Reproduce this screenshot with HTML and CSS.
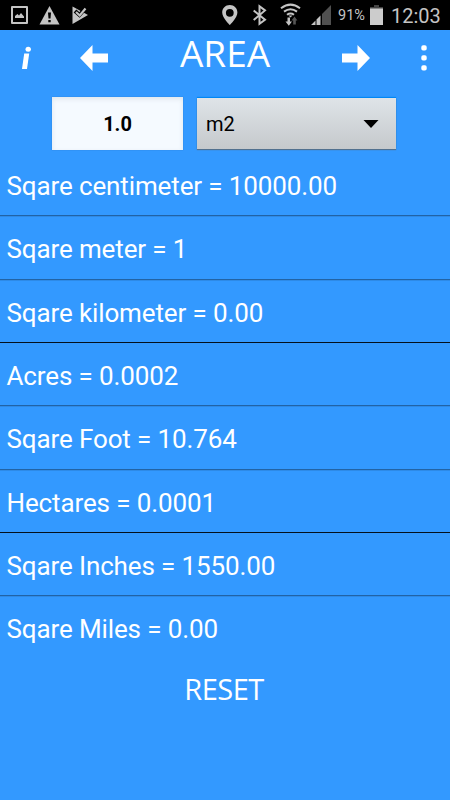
FILE: index.html
```html
<!DOCTYPE html>
<html lang="en">
<head>
  <meta charset="UTF-8" />
  <meta name="viewport" content="width=device-width, initial-scale=1.0" />
  <title>Area</title>
  <link rel="stylesheet" href="styles.css">
</head>
<body>
  <div class="status-bar">
    <svg class="status-left" width="100" height="30" viewBox="0 0 100 30">
      <path d="M12 7h15v16H12z" fill="none" stroke="#c4c4c4" stroke-width="2" stroke-linejoin="round" />
      <path d="M15 18v-2l2.500-2 1.500 1.500 2-2.500 3 3.500V18z" fill="#c4c4c4" />
      <path d="M49.500 6L59.500 24.500H39.500z" fill="#c4c4c4" />
      <path d="M48 12.500h3l-.5 6h-2zM48.300 20h2.400v2.300h-2.400z" fill="#000" />
      <path d="M72.500 6.500L88 15 72.500 24z" fill="#c4c4c4" />
      <path d="M75 11l4.500 4L87 6.500" fill="none" stroke="#000" stroke-width="4" />
      <path d="M76 12l3.700 3.500L85.500 8.500" fill="none" stroke="#c4c4c4" stroke-width="2.200" />
    </svg>
    <svg class="status-right" width="116" height="30" viewBox="218 0 116 30">
      <path fill-rule="evenodd" d="M229.800 5c-4.400 0-7.600 3.300-7.600 7.400 0 5.200 7.600 12.600 7.600 12.600s7.600-7.400 7.600-12.600c0-4.100-3.200-7.400-7.600-7.400zm0 3.900a3.900 3.900 0 1 1 0 7.800 3.900 3.900 0 0 1 0-7.800z" fill="#c4c4c4" />
      <path d="M253.700 10.500l11.300 9.200-5.500 4V6.200l5.500 4.200-11.300 9.600" fill="none" stroke="#c4c4c4" stroke-width="2" />
      <g fill="none" stroke="#c4c4c4" stroke-width="2">
        <path d="M281 8.300q9.500-7.400 19 0" />
        <path d="M284 11.600q6.500-4.800 13 0" />
        <path d="M287 14.800q3.500-2.500 7 0" />
      </g>
      <path d="M288.500 15.500h4l-2 2z" fill="#c4c4c4" />
      <path d="M287.500 17.500h2.500v4h2l-3.200 4.200-3.300-4.200h2z" fill="#c4c4c4" />
      <path d="M293.200 24.500h2.600v-4h1.600l-2.900-4-2.900 4h1.600z" fill="#555" />
      <path d="M331 5v20h-9V14z" fill="#505050" />
      <path d="M320.500 15.500V25h-4v-5.500zM315.500 20.500V25H311z" fill="#c4c4c4" />
    </svg>
    <span class="percent">91%</span>
    <svg class="battery" width="13" height="20" viewBox="0 0 13 20">
      <path d="M4 0h5v2h4v2H0V2h4z" fill="#444" />
      <path d="M0 3.500h13V20H0z" fill="#ccc" />
    </svg>
    <span class="clock">12:03</span>
  </div>

  <div class="header">
    <svg class="icon" width="14" height="26" viewBox="0 0 14 26">
      <ellipse cx="8.200" cy="4.300" rx="2.700" ry="2.500" />
      <path d="M4.200 8.500h5L7 24H2z" />
    </svg>
    <svg class="icon back" width="28" height="26" viewBox="0 0 28 26">
      <path d="M0 13L12.500 0v8.500H28v9H12.500V26z" />
    </svg>
    <h1>AREA</h1>
    <svg class="icon next" width="28" height="26" viewBox="0 0 28 26">
      <path d="M28 13L15.500 0v8.500H0v9h15.500V26z" />
    </svg>
    <svg class="icon" width="6" height="26" viewBox="0 0 6 26">
      <rect x="0.300" y="0.200" width="5.400" height="5.400" rx="1.800" />
      <rect x="0.300" y="10.200" width="5.400" height="5.400" rx="1.800" />
      <rect x="0.300" y="20.200" width="5.400" height="5.400" rx="1.800" />
    </svg>
  </div>

  <div class="controls">
    <div class="value">1.0</div>
    <div class="unit">
      <span>m2</span>
      <svg width="16" height="8" viewBox="0 0 16 8"><path d="M0.500 0h15L8 8z" /></svg>
    </div>
  </div>

  <div class="results">
    <div class="row">Sqare centimeter = 10000.00</div>
    <div class="row">Sqare meter = 1</div>
    <div class="row dark">Sqare kilometer = 0.00</div>
    <div class="row">Acres = 0.0002</div>
    <div class="row">Sqare Foot = 10.764</div>
    <div class="row dark">Hectares = 0.0001</div>
    <div class="row">Sqare Inches = 1550.00</div>
    <div class="row last">Sqare Miles = 0.00</div>
  </div>

  <div class="reset">RESET</div>
</body>
</html>
```

FILE: styles.css
```css
* {
  box-sizing: border-box;
}

body {
  margin: 0;
  width: 450px;
  height: 800px;
  overflow: hidden;
  display: flex;
  flex-direction: column;
  background: #3399ff;
  color: #fff;
  font-family: Roboto, sans-serif;
}

svg {
  display: block;
  flex: none;
}

.status-bar {
  height: 30px;
  flex: none;
  display: flex;
  align-items: center;
  background: #000;
  color: #c4c4c4;
}

.status-right {
  margin-left: 118px;
}

.percent {
  width: 32px;
  margin-left: 4px;
  font-size: 14.5px;
  line-height: 18px;
  padding-top: 2px;
}

.battery {
  margin-right: 8px;
}

.clock {
  font-size: 20px;
  line-height: 24px;
  padding-top: 1px;
}

.header {
  height: 56px;
  flex: none;
  display: flex;
  align-items: center;
  padding: 0 23px 0 20px;
}

.icon {
  fill: #fff;
}

.back {
  margin-left: 46px;
}

.next {
  margin-right: 51px;
}

h1 {
  flex: 1;
  margin: 0;
  padding-bottom: 10px;
  text-align: center;
  font: 400 37px/48px "Open Sans", sans-serif;
}

.controls {
  height: 67px;
  flex: none;
  display: flex;
  gap: 14px;
  padding: 11px 0 0 52px;
}

.value {
  width: 131px;
  height: 53px;
  background: #f5faff;
  box-shadow: inset 0 2px 5px #dfe6ec, 0 0 1px #2a78c8;
  color: #000;
  font-size: 20px;
  font-weight: 700;
  line-height: 54px;
  text-align: center;
}

.unit {
  width: 199px;
  height: 51px;
  margin-top: 1px;
  display: flex;
  align-items: center;
  justify-content: space-between;
  padding: 1px 17px 0 9px;
  background: linear-gradient(to bottom, #dfe4e8, #c5c9cc);
  box-shadow: 0 1px 1px #52718f, 0 -1px 1px #0087f5;
  color: #000;
  font-size: 20px;
}

.results {
  flex: none;
}

.row {
  height: 63.333px;
  padding-left: 6.5px;
  border-bottom: 1px solid #2263a5;
  box-shadow: 0 1px 0 #2e8ae6;
  font-size: 26px;
  line-height: 66px;
  letter-spacing: -0.12px;
  white-space: nowrap;
}

.dark {
  border-color: #04101c;
  box-shadow: none;
}

.last {
  border-color: transparent;
  box-shadow: none;
}

.reset {
  margin-top: 9px;
  padding-right: 2px;
  text-align: center;
  font: 400 29px/40px "Open Sans", sans-serif;
  letter-spacing: -0.5px;
}
```
